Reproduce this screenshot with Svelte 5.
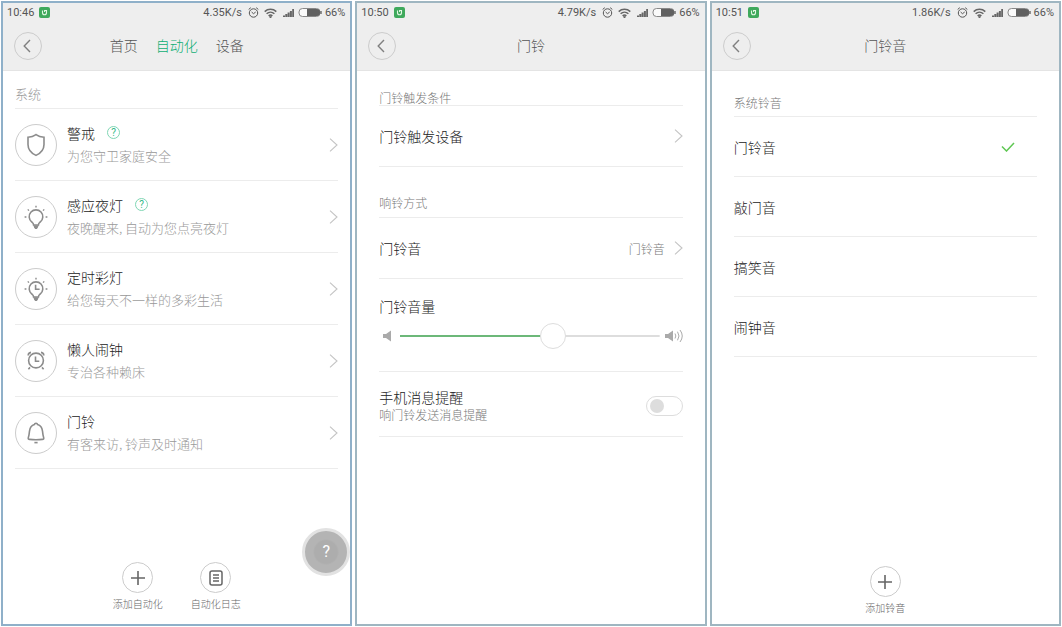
<script>
  const automations = [
    { icon: 'shield', title: '警戒', desc: '为您守卫家庭安全', help: true },
    { icon: 'bulb', title: '感应夜灯', desc: '夜晚醒来, 自动为您点亮夜灯', help: true },
    { icon: 'bulb-clock', title: '定时彩灯', desc: '给您每天不一样的多彩生活' },
    { icon: 'alarm', title: '懒人闹钟', desc: '专治各种赖床' },
    { icon: 'bell', title: '门铃', desc: '有客来访, 铃声及时通知' }
  ];
  const tabs = ['首页', '自动化', '设备'];
  const tones = ['门铃音', '敲门音', '搞笑音', '闹钟音'];

  let tab = $state('自动化');
  let tone = $state('门铃音');
  let volume = $state(60);
  let notify = $state(false);
</script>

{#snippet statusBar(time, speed)}
  <div class="status">
    <span>{time}</span>
    <svg class="app" width="11" height="11" viewBox="0 0 11 11">
      <rect width="11" height="11" rx="2" fill="#3fa95c" />
      <path d="M3.5 3.5v2.2a2 2 0 0 0 4 0V3.5H5.6v1.6" fill="none" stroke="#e4f7e4" stroke-width="1.1" />
    </svg>
    <span class="speed">{speed}</span>
    <svg width="11" height="11" viewBox="0 0 11 11" fill="none" stroke="#555" stroke-width="1">
      <circle cx="5.5" cy="6" r="4.2" />
      <path d="M.7 2.4 2.8.7M10.3 2.4 8.2.7M3.6 5l1.9 1.7L7.7 5" />
    </svg>
    <svg class="wifi" width="13" height="10" viewBox="0 0 13 10" fill="none" stroke="#666" stroke-width="1.5">
      <path d="M.7 3.6a8.6 8.6 0 0 1 11.600 0M2.600 5.800a5.800 5.800 0 0 1 7.800 0M4.600 7.800a3 3 0 0 1 3.800 0" />
      <circle cx="6.5" cy="8.8" r=".5" />
    </svg>
    <svg class="signal" width="11" height="9" viewBox="0 0 11 9" fill="#666">
      <path d="M0 7.5h2V9H0zM2.300 6h2v3h-2zM4.600 4.500h2V9h-2zM6.900 3h2v6h-2zM9.200 1h1.800v8H9.200z" />
    </svg>
    <svg class="battery" width="24" height="9" viewBox="0 0 24 9">
      <rect x="1" y=".5" width="21" height="8" rx="3.5" fill="#fafafa" stroke="#888" />
      <path d="M9 1h10a3 3 0 0 1 3 3v1a3 3 0 0 1-3 3H9z" fill="#606060" />
      <path d="M23 3v3" stroke="#666" stroke-width="1.4" />
    </svg>
    <span>66%</span>
  </div>
{/snippet}

{#snippet back()}
  <button class="back" aria-label="返回">
    <svg width="8" height="14" viewBox="0 0 8 14" fill="none" stroke="#808080" stroke-width="1.4">
      <path d="M7 1 1.2 7 7 13" />
    </svg>
  </button>
{/snippet}

{#snippet chevron()}
  <svg class="chevron" width="9" height="14" viewBox="0 0 9 14" fill="none" stroke="#c4c4c4" stroke-width="1.1">
    <path d="M1 .7 8 7l-7 6.3" />
  </svg>
{/snippet}

{#snippet bulb()}
  <path d="M15 3.700v1.800M6.800 7.400l1.100 1.200M23.200 7.400l-1.100 1.200M3.600 15h1.800M24.600 15h1.800" stroke-width="1.4" />
  <path d="M12.600 23c0-1.600-.6-2-1.800-3a6.800 6.800 0 1 1 8.400 0c-1.200 1-1.800 1.400-1.800 3z" />
  <path d="M12.300 23.300h5.400l-.8 2.300-1 1.400h-1.800l-1-1.400z" fill="#8c8c8c" stroke="none" />
{/snippet}

{#snippet automationIcon(name)}
  <svg width="30" height="30" viewBox="0 0 30 30" fill="none" stroke="#8c8c8c" stroke-width="1.6">
    {#if name === 'shield'}
      <path d="M15 4.600c2.400 1.700 5 2.500 8 2.700v7.100c0 5-3 8.600-8 11-5-2.400-8-6-8-11V7.300c3-.2 5.600-1 8-2.700z" />
    {:else if name === 'bulb'}
      {@render bulb()}
    {:else if name === 'bulb-clock'}
      {@render bulb()}
      <path d="M14.600 10.800v4.400h4" />
    {:else if name === 'alarm'}
      <circle cx="15" cy="14.5" r="7.4" />
      <path d="M14.500 10.400v4.800h3.800M7.200 9.400C7.200 7.600 8.200 6.600 10 6.400M22.800 9.400c0-1.800-1-2.800-2.800-3M9 21.400l-1.600 1.800M21 21.400l1.600 1.800" />
    {:else}
      <path d="M13.400 6.600c.3-1.800 2.900-1.800 3.200 0 3 .8 4.500 3.200 4.900 6.500.3 3 .5 4.800 1.200 6.700.3 1-.2 1.600-1.200 1.600-4.300.4-8.700.4-13 0-1 0-1.500-.6-1.200-1.600.7-1.900.9-3.700 1.200-6.700.4-3.300 1.900-5.700 4.900-6.500z" />
      <path d="M13.400 24.600h3.200" />
    {/if}
  </svg>
{/snippet}

{#snippet plus()}
  <svg width="16" height="16" viewBox="0 0 16 16" stroke="#666" stroke-width="1.6">
    <path d="M8 1v14M1 8h14" />
  </svg>
{/snippet}

<main>
  <section class="phone">
    {@render statusBar('10:46', '4.35K/s')}
    <header>
      {@render back()}
      <nav>
        {#each tabs as name}
          <button class="tab" class:active={tab === name} onclick={() => (tab = name)}>{name}</button>
        {/each}
      </nav>
    </header>

    <div class="content">
      <h2>系统</h2>
      {#each automations as item}
        <button class="automation">
          <span class="ring">{@render automationIcon(item.icon)}</span>
          <span class="text">
            <span class="title">
              {item.title}
              {#if item.help}<span class="help">?</span>{/if}
            </span>
            <span class="desc">{item.desc}</span>
          </span>
          {@render chevron()}
        </button>
      {/each}
    </div>

    <footer>
      <button class="action">
        <span class="disc">{@render plus()}</span>
        添加自动化
      </button>
      <button class="action">
        <span class="disc">
          <svg width="14" height="16" viewBox="0 0 14 16" fill="none" stroke="#666" stroke-width="1.5">
            <rect x="1" y="1" width="12" height="14" rx="2" />
            <path d="M4 5h6M4 8h6M4 11h6" stroke-width="1.3" />
          </svg>
        </span>
        自动化日志
      </button>
    </footer>
    <button class="fab" aria-label="帮助">?</button>
  </section>

  <section class="phone doorbell">
    {@render statusBar('10:50', '4.79K/s')}
    <header>
      {@render back()}
      <h1>门铃</h1>
    </header>

    <div class="content">
      <h2 class="trigger">门铃触发条件</h2>
      <button class="row">
        <span>门铃触发设备</span>
        {@render chevron()}
      </button>
      <h2 class="mode">响铃方式</h2>
      <button class="row">
        <span>门铃音</span>
        <span class="value">{tone}</span>
        {@render chevron()}
      </button>

      <div class="volume">
        <label for="volume">门铃音量</label>
        <div class="slider">
          <svg width="18" height="12" viewBox="0 0 18 12" fill="#aaa">
            <path d="M4 4h3l5-3.500v11L7 8H4z" />
          </svg>
          <input
            id="volume"
            type="range"
            min="0"
            max="100"
            bind:value={volume}
            style="--fill: {volume}%"
          />
          <svg width="20" height="14" viewBox="0 0 20 14" fill="#aaa">
            <path d="M2 5h3l5-3.500v11L5 9H2z" />
            <path d="M12 4.500q1.700 2.500 0 5M14.500 2.700q3 4.300 0 8.600M17 1q4.500 6 0 12" fill="none" stroke="#aaa" />
          </svg>
        </div>
      </div>

      <div class="notify">
        <label for="notify">
          手机消息提醒
          <small>响门铃发送消息提醒</small>
        </label>
        <input id="notify" type="checkbox" role="switch" bind:checked={notify} />
      </div>
    </div>
  </section>

  <section class="phone tones">
    {@render statusBar('10:51', '1.86K/s')}
    <header>
      {@render back()}
      <h1>门铃音</h1>
    </header>

    <div class="content">
      <h2>系统铃音</h2>
      {#each tones as name}
        <label class="row">
          <input type="radio" name="tone" value={name} bind:group={tone} />
          <span>{name}</span>
          {#if tone === name}
            <svg class="check" width="14" height="10" viewBox="0 0 14 10" fill="none" stroke="#5fc753" stroke-width="1.5">
              <path d="M1 4.500 5.500 9 13 1" />
            </svg>
          {/if}
        </label>
      {/each}
    </div>

    <footer>
      <button class="action">
        <span class="disc">{@render plus()}</span>
        添加铃音
      </button>
    </footer>
  </section>
</main>

<style>
  :global(body) {
    margin: 0;
    background: #fff;
  }

  main {
    display: grid;
    grid-template-columns: repeat(3, 1fr);
    gap: 3px;
    min-height: 100vh;
    padding: 1px;
    box-sizing: border-box;
    font-family: 'Noto Sans CJK SC', sans-serif;
    font-size: 14px;
    font-weight: 300;
    color: #222;
  }

  button {
    padding: 0;
    border: 0;
    background: none;
    font: inherit;
    color: inherit;
    text-align: left;
    cursor: pointer;
  }

  svg {
    display: block;
    flex: none;
  }

  .phone {
    position: relative;
    display: flex;
    flex-direction: column;
    border: 2px solid #9fb6c1;
    background: #fff;
  }

  .phone:first-child {
    border-color: #8fb0c9;
  }

  .status {
    display: flex;
    align-items: center;
    height: 19px;
    padding: 0 5px 1px 4px;
    background: #eee;
    font: 11px/19px Roboto, sans-serif;
    color: #555;
  }

  .app {
    margin-left: 5px;
  }

  .speed {
    margin: 0 6px 0 auto;
  }

  .wifi {
    margin-left: 5px;
  }

  .signal {
    margin-left: 6px;
  }

  .battery {
    margin: 0 3px 0 4px;
  }

  header {
    display: grid;
    grid-template-columns: 28px 1fr 28px;
    align-items: center;
    height: 45px;
    padding: 0 11px 2px;
    border-bottom: 1px solid #e4e4e4;
    background: #eee;
    color: #555;
  }

  .back {
    display: flex;
    align-items: center;
    justify-content: center;
    width: 28px;
    height: 28px;
    box-sizing: border-box;
    padding-right: 2px;
    border: 1px solid #ccc;
    border-radius: 50%;
  }

  nav {
    display: flex;
    justify-content: center;
    gap: 18px;
    line-height: 20px;
    padding-bottom: 1px;
  }

  .tab.active {
    color: #0fae74;
  }

  h1 {
    margin: 0;
    padding-bottom: 1px;
    font-size: 14px;
    font-weight: 300;
    line-height: 20px;
    text-align: center;
  }

  .content {
    padding: 0 12px;
  }

  h2 {
    margin: 0;
    padding: 14px 0 5px;
    border-bottom: 1px solid #ececec;
    font-size: 13px;
    font-weight: 300;
    line-height: 18px;
    color: #999;
  }

  .automation {
    display: flex;
    align-items: center;
    width: 100%;
    height: 72px;
    box-sizing: border-box;
    border-bottom: 1px solid #ececec;
  }

  .ring {
    display: flex;
    align-items: center;
    justify-content: center;
    width: 42px;
    height: 42px;
    box-sizing: border-box;
    border: 1px solid #ccc;
    border-radius: 50%;
  }

  .text {
    display: flex;
    flex: 1;
    flex-direction: column;
    padding-left: 10px;
  }

  .title {
    display: flex;
    align-items: center;
    gap: 12px;
    line-height: 22px;
  }

  .help {
    width: 11px;
    border: 1px solid #7fd6b4;
    border-radius: 50%;
    font: 10px/11px Roboto, sans-serif;
    text-align: center;
    color: #2fb985;
  }

  .desc {
    font-size: 13px;
    line-height: 24px;
    color: #999;
  }

  footer {
    display: flex;
    justify-content: center;
    gap: 28px;
    margin-top: auto;
    padding-bottom: 13px;
  }

  .action {
    display: flex;
    flex-direction: column;
    align-items: center;
    gap: 4px;
    font-size: 10px;
    line-height: 14px;
    color: #666;
  }

  .disc {
    display: flex;
    align-items: center;
    justify-content: center;
    width: 31px;
    height: 31px;
    box-sizing: border-box;
    border: 1px solid #ccc;
    border-radius: 50%;
  }

  .fab {
    position: absolute;
    right: 0;
    bottom: 48px;
    width: 48px;
    height: 48px;
    border: 3px solid #e2e2e2;
    border-radius: 50%;
    background: radial-gradient(circle, #adadad 38%, #b4b4b4 44%);
    font: 16px/42px Roboto, sans-serif;
    text-align: center;
    color: #fff;
  }

  .doorbell .content,
  .tones .content {
    padding: 0 22px;
  }

  .doorbell h2,
  .tones h2 {
    font-size: 12px;
    line-height: 14px;
    color: #777;
  }

  .doorbell h2.trigger {
    padding: 20px 0 0;
  }

  .doorbell h2.mode {
    padding: 29px 0 7px;
  }

  .tones h2 {
    padding: 25px 0 6px;
  }

  .row {
    display: flex;
    align-items: center;
    width: 100%;
    height: 61px;
    box-sizing: border-box;
    border-bottom: 1px solid #ececec;
  }

  .row .value {
    margin-left: auto;
    font-size: 12px;
    color: #777;
  }

  .row :global(.chevron) {
    margin-left: auto;
  }

  .value + :global(.chevron) {
    margin-left: 9px;
  }

  .volume {
    height: 93px;
    box-sizing: border-box;
    padding-top: 17px;
    border-bottom: 1px solid #ececec;
  }

  .volume label {
    display: block;
    line-height: 20px;
  }

  .slider {
    display: flex;
    align-items: center;
    gap: 3px;
    margin-top: 7px;
  }

  .slider input {
    flex: 1;
    min-width: 0;
    height: 26px;
    margin: 0;
    appearance: none;
    background: linear-gradient(#6cb879, #6cb879) left / var(--fill) 2px no-repeat,
      linear-gradient(#ddd, #ddd) center / 100% 2px no-repeat;
  }

  .slider input::-webkit-slider-thumb {
    appearance: none;
    width: 26px;
    height: 26px;
    border: 1px solid #ddd;
    border-radius: 50%;
    background: #fff;
  }

  .notify {
    display: flex;
    align-items: center;
    height: 65px;
    box-sizing: border-box;
    padding-top: 4px;
    border-bottom: 1px solid #ececec;
  }

  .notify label {
    flex: 1;
    line-height: 18px;
  }

  small {
    display: block;
    font-size: 12px;
    color: #777;
  }

  .notify input {
    width: 37px;
    height: 20px;
    box-sizing: border-box;
    margin: 0;
    padding: 2px 3px;
    appearance: none;
    border: 1px solid #ddd;
    border-radius: 10px;
  }

  .notify input::before {
    content: '';
    display: block;
    width: 14px;
    height: 14px;
    border-radius: 50%;
    background: #ddd;
  }

  .notify input:checked {
    padding-left: 18px;
    background: #6cb879;
  }

  .tones .row {
    height: 60px;
    cursor: pointer;
  }

  .tones .row input {
    width: 0;
    height: 0;
    margin: 0;
    appearance: none;
  }

  .check {
    margin: 0 22px 0 auto;
  }

  .tones footer {
    padding-bottom: 9px;
  }
</style>
